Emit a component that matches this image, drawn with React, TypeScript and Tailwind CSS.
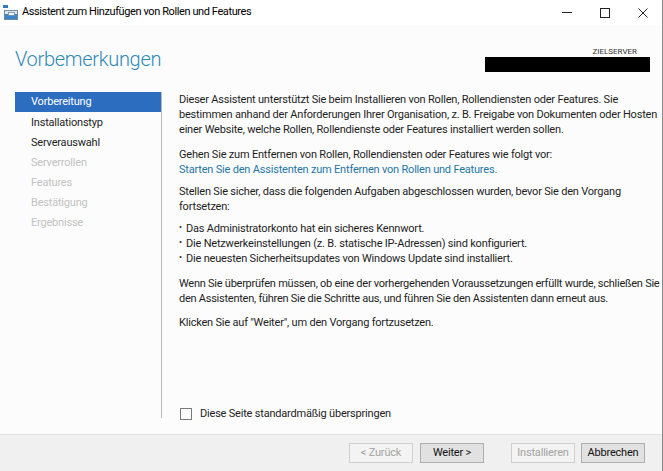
const navItems = [
  { label: 'Vorbereitung', state: 'active' },
  { label: 'Installationstyp', state: 'done' },
  { label: 'Serverauswahl', state: 'done' },
  { label: 'Serverrollen', state: 'off' },
  { label: 'Features', state: 'off' },
  { label: 'Bestätigung', state: 'off' },
  { label: 'Ergebnisse', state: 'off' },
]

const checks = [
  'Das Administratorkonto hat ein sicheres Kennwort.',
  'Die Netzwerkeinstellungen (z. B. statische IP-Adressen) sind konfiguriert.',
  'Die neuesten Sicherheitsupdates von Windows Update sind installiert.',
]

function AppIcon() {
  return (
    <svg width="16" height="16" viewBox="0 0 16 16">
      <rect x="0" y="0" width="5" height="3" fill="#2f78c4" />
      <rect x="1.5" y="5.5" width="13" height="9" fill="#dfe7ef" stroke="#6f8aa5" strokeWidth="1" />
      <rect x="2" y="9" width="12" height="5" fill="#3d84c8" />
      <rect x="5.5" y="7.5" width="6" height="3" fill="#f4f7fa" stroke="#6f8aa5" strokeWidth="0.8" />
    </svg>
  )
}

function CaptionButtons() {
  return (
    <div className="flex h-full items-center">
      <div className="flex h-full w-[38px] items-center justify-center">
        <div className="h-px w-[10px] bg-[#222]" />
      </div>
      <div className="flex h-full w-[38px] items-center justify-center">
        <div className="h-[10px] w-[10px] border border-[#222]" />
      </div>
      <div className="flex h-full w-[38px] items-center justify-center">
        <svg width="10" height="10" viewBox="0 0 10 10">
          <path d="M0.5 0.5 L9.5 9.5 M9.5 0.5 L0.5 9.5" stroke="#222" strokeWidth="1" />
        </svg>
      </div>
    </div>
  )
}

function WizardButton({ label, disabled, className = '' }: { label: string; disabled?: boolean; className?: string }) {
  return (
    <button
      className={
        (disabled
          ? 'h-[20px] w-[64px] border border-[#cfcfcf] bg-[#f3f3f3] text-[#a3a3a3] '
          : 'h-[20px] w-[64px] border border-[#adadad] bg-[#e1e1e1] text-[#111] ') + className
      }
    >
      {label}
    </button>
  )
}

export default function App() {
  return (
    <div className="flex h-[471px] w-[663px] flex-col overflow-hidden border-r border-[#8a8a8a] bg-[#fcfcfc] font-['Roboto',sans-serif] text-[11px] tracking-[-0.2px] text-[#1e1e1e]">
      {/* title bar */}
      <div className="flex h-[25px] shrink-0 items-center justify-between bg-white">
        <div className="flex items-center">
          <div className="ml-[3px] mt-[1px]">
            <AppIcon />
          </div>
          <span className="ml-[3px] tracking-[-0.4px] text-black">Assistent zum Hinzufügen von Rollen und Features</span>
        </div>
        <CaptionButtons />
      </div>

      {/* header */}
      <div className="flex h-[67px] shrink-0 justify-between">
        <h1 className="ml-[15px] mt-[21px] text-[20px] font-light leading-[26px] tracking-[-0.3px] text-[#2f89b5]">Vorbemerkungen</h1>
        <div className="mr-[12px] mt-[21px] flex flex-col items-end">
          <span className="mr-[13px] text-[8px] leading-[11px] tracking-normal text-[#333]">ZIELSERVER</span>
          <div className="h-[15px] w-[165px] bg-black" />
        </div>
      </div>

      {/* main */}
      <div className="flex min-h-0 flex-1">
        <nav className="mb-[16px] ml-[15px] flex w-[146px] shrink-0 flex-col">
          {navItems.map((item) => (
            <div
              key={item.label}
              className={
                item.state === 'active'
                  ? 'mb-[1px] flex h-[20px] items-center bg-[#2c6dc0] pl-[16px] text-white'
                  : item.state === 'done'
                    ? 'flex h-[20px] items-center pl-[16px] text-[#1e1e1e]'
                    : 'flex h-[20px] items-center pl-[16px] text-[#c2c2c2]'
              }
            >
              {item.label}
            </div>
          ))}
        </nav>
        <div className="mb-[16px] w-px shrink-0 bg-[#b9b9b9]" />

        <div className="ml-[17px] flex min-w-0 flex-1 flex-col pb-[13px] leading-[15px]">
          <p className="whitespace-nowrap">
            Dieser Assistent unterstützt Sie beim Installieren von Rollen, Rollendiensten oder Features. Sie
            <br />
            bestimmen anhand der Anforderungen Ihrer Organisation, z. B. Freigabe von Dokumenten oder Hosten
            <br />
            einer Website, welche Rollen, Rollendienste oder Features installiert werden sollen.
          </p>
          <p className="mt-[10px] whitespace-nowrap">Gehen Sie zum Entfernen von Rollen, Rollendiensten oder Features wie folgt vor:</p>
          <a className="w-fit whitespace-nowrap text-[#1f77a6]">Starten Sie den Assistenten zum Entfernen von Rollen und Features.</a>
          <p className="mt-[7px] whitespace-nowrap">
            Stellen Sie sicher, dass die folgenden Aufgaben abgeschlossen wurden, bevor Sie den Vorgang
            <br />
            fortsetzen:
          </p>
          <ul className="mt-[7px]">
            {checks.map((t) => (
              <li key={t} className="flex whitespace-nowrap">
                <span className="w-[7px] text-[9px] leading-[13px]">•</span>
                <span>{t}</span>
              </li>
            ))}
          </ul>
          <p className="mt-[10px] whitespace-nowrap tracking-[-0.25px]">
            Wenn Sie überprüfen müssen, ob eine der vorhergehenden Voraussetzungen erfüllt wurde, schließen Sie
            <br />
            den Assistenten, führen Sie die Schritte aus, und führen Sie den Assistenten dann erneut aus.
          </p>
          <p className="mt-[9px] whitespace-nowrap">Klicken Sie auf "Weiter", um den Vorgang fortzusetzen.</p>

          <label className="mt-auto flex items-center">
            <span className="ml-px h-[12px] w-[12px] border border-[#7a7a7a] bg-white" />
            <span className="ml-[8px]">Diese Seite standardmäßig überspringen</span>
          </label>
        </div>
      </div>

      {/* footer */}
      <div className="flex h-[37px] shrink-0 items-center justify-end border-t border-[#e2e2e2] bg-[#f0f0f0] pr-[17px]">
        <WizardButton label="< Zurück" disabled />
        <WizardButton label="Weiter >" className="ml-[7px]" />
        <WizardButton label="Installieren" disabled className="ml-[27px]" />
        <WizardButton label="Abbrechen" className="ml-[6px]" />
      </div>
    </div>
  )
}
